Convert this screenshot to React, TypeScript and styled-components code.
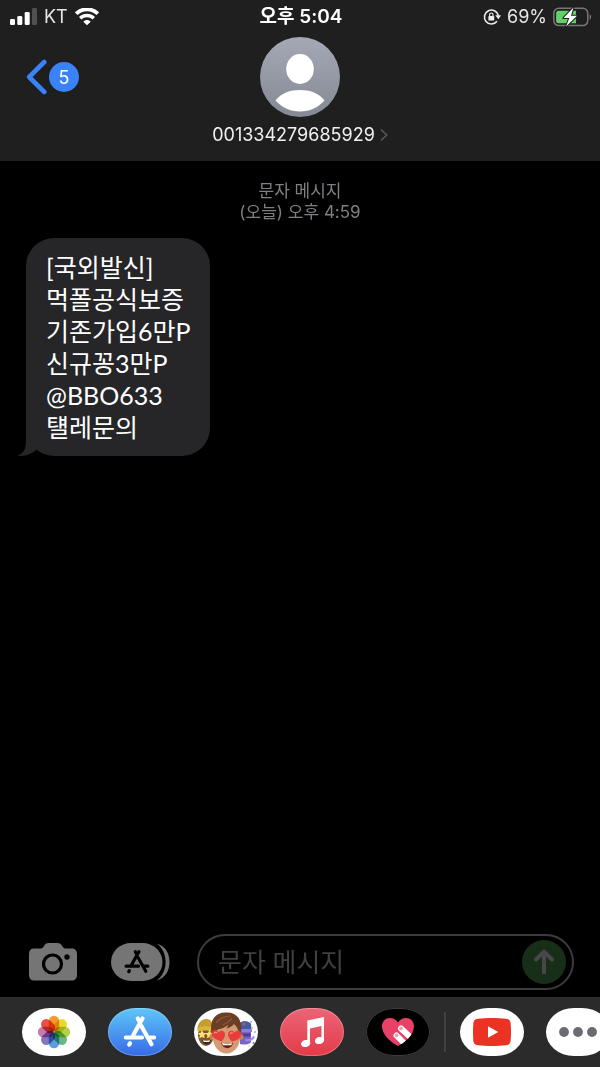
import React from 'react';
import styled, { createGlobalStyle } from 'styled-components';

const GlobalStyle = createGlobalStyle`
  * {
    box-sizing: border-box;
  }

  body {
    margin: 0;
    background: #000;
    color: #fff;
    font-family: Inter, 'Noto Sans CJK KR', sans-serif;
  }

  button {
    padding: 0;
    border: 0;
    background: none;
    color: inherit;
    font: inherit;
    cursor: pointer;
  }

  svg {
    display: block;
    flex: none;
  }
`;

const Screen = styled.div`
  display: flex;
  flex-direction: column;
  min-height: 100vh;
  overflow: hidden;
`;

const Header = styled.header`
  padding-bottom: 14px;
  background: #1f1f1f;
`;

const StatusBar = styled.div`
  display: grid;
  grid-template-columns: 1fr auto 1fr;
  align-items: center;
  height: 33px;
  padding: 0 8px 0 10px;
  font-size: 18px;
  line-height: 33px;
`;

const StatusGroup = styled.div<{ $end?: boolean }>`
  display: flex;
  align-items: center;
  justify-content: ${({ $end }) => ($end ? 'flex-end' : 'flex-start')};
  gap: ${({ $end }) => ($end ? '6px' : '7px')};
  color: #e6e6e6;
`;

const Clock = styled.time`
  font-size: 19px;
  font-weight: 600;
`;

const NavBar = styled.nav`
  display: grid;
  grid-template-columns: 1fr auto 1fr;
  align-items: start;
  padding: 4px 26px 0;
`;

const BackLink = styled.a`
  display: flex;
  align-items: center;
  gap: 2px;
  height: 80px;
  color: #3a82f7;
  text-decoration: none;
`;

const UnreadBadge = styled.span`
  width: 30px;
  height: 30px;
  border-radius: 50%;
  background: #3a82f7;
  color: #fff;
  font-size: 18px;
  line-height: 31px;
  text-align: center;
`;

const ContactButton = styled.button`
  display: flex;
  flex-direction: column;
  align-items: center;
  gap: 6px;
`;

const ContactName = styled.span`
  display: flex;
  align-items: center;
  gap: 5px;
  color: #f0f0f0;
  font-size: 18px;
  line-height: 24px;
`;

const Thread = styled.main`
  flex: 1;
  padding: 20px 26px;
`;

const ThreadDate = styled.p`
  margin: 0 0 15px;
  color: #7f7f84;
  font-size: 17px;
  line-height: 21px;
  text-align: center;
`;

const Bubble = styled.div`
  position: relative;
  width: fit-content;
  padding: 13px 19px 13px 20px;
  border-radius: 28px;
  background: #262628;
  font-family: Lato, 'Noto Sans CJK KR', sans-serif;
  font-size: 25px;
  line-height: 32px;
`;

const BubbleTail = styled.svg`
  position: absolute;
  left: -9px;
  bottom: 0;
`;

const Composer = styled.form`
  display: flex;
  align-items: center;
  padding: 0 26px 7px 28px;
`;

const ToolButton = styled.button<{ $space: number }>`
  flex: none;
  margin-right: ${({ $space }) => $space}px;
`;

const Field = styled.div`
  display: flex;
  flex: 1;
  align-items: center;
  min-width: 0;
  height: 56px;
  padding: 0 6px 0 19px;
  border: 2px solid #3c3c3c;
  border-radius: 28px;
`;

const MessageInput = styled.input`
  flex: 1;
  min-width: 0;
  padding: 0;
  border: 0;
  outline: none;
  background: transparent;
  color: #fff;
  font-family: Lato, 'Noto Sans CJK KR', sans-serif;
  font-size: 26px;
  line-height: 36px;

  &::placeholder {
    color: #404042;
    opacity: 1;
  }
`;

const SendButton = styled.button`
  display: grid;
  flex: none;
  place-items: center;
  width: 44px;
  height: 44px;
  border-radius: 50%;
  background: #172f19;
`;

const AppDrawer = styled.footer`
  display: flex;
  align-items: center;
  height: 70px;
  padding-left: 22px;
  overflow: hidden;
  background: #2b2b2b;
`;

const AppGroup = styled.div`
  display: flex;
  flex: none;
  gap: 22px;
`;

const DrawerDivider = styled.div`
  flex: none;
  width: 2px;
  height: 40px;
  margin: 0 14px;
  background: #414141;
`;

const AppButton = styled.button<{ $bg: string; $edge?: string }>`
  display: grid;
  flex: none;
  place-items: center;
  width: 64px;
  height: 48px;
  border-radius: 28px / 24px;
  background: ${({ $bg }) => $bg};
  box-shadow: inset 0 0 0 1px ${({ $edge }) => $edge ?? 'transparent'};
  overflow: hidden;
`;

function SignalIcon() {
  return (
    <svg width="27" height="18" viewBox="0 0 27 18" fill="#fff">
      <rect y="11" width="5" height="6" rx="1.3" />
      <rect x="7.3" y="8" width="5" height="9" rx="1.3" />
      <rect x="14.7" y="4" width="5" height="13" rx="1.3" />
      <rect x="22" width="5" height="17" rx="1.3" fill="#505050" />
    </svg>
  );
}

function WifiIcon() {
  return (
    <svg width="24" height="18" viewBox="0 0 24 18" fill="none" stroke="#fff">
      <path d="M1.2 5.700C7.2-.2 16.8-.2 22.8 5.700" strokeWidth="3.7" />
      <path d="M5.2 10.300c3.800-3.600 9.800-3.600 13.600 0" strokeWidth="3.500" />
      <path d="M12 17.300l-3.700-3.500c2-2.300 5.400-2.300 7.400 0z" fill="#fff" stroke="none" />
    </svg>
  );
}

function RotationLockIcon() {
  return (
    <svg width="18" height="18" viewBox="0 0 18 18" fill="none" stroke="#eee">
      <path d="M14 13.300A7 7 0 1 1 15.300 7.500" strokeWidth="1.6" />
      <path d="M12.300 7.300h5.700l-2.600 4z" fill="#eee" stroke="none" />
      <rect x="5.400" y="8" width="5.800" height="4.600" rx=".7" fill="#eee" stroke="none" />
      <path d="M6.600 8.200V6.700a1.700 1.700 0 0 1 3.400 0v1.500" strokeWidth="1.1" />
    </svg>
  );
}

function BatteryIcon() {
  return (
    <svg width="39" height="20" viewBox="0 0 39 20">
      <rect x=".8" y="1.2" width="34" height="17.4" rx="5" fill="none" stroke="#77777a" strokeWidth="1.5" />
      <path d="M36.6 7.2c2 .9 2 4.6 0 5.6z" fill="#77777a" />
      <path d="M5.6 3.7H23v12.500H5.6A2.5 2.5 0 0 1 3.1 13.700V6.200a2.500 2.500 0 0 1 2.500-2.500z" fill="#65ce66" />
      <path
        d="M20.500.500 10.500 11h5.800l-3.200 8.500L24 8.700h-6z"
        fill="#fff"
        stroke="#1f1f1f"
        strokeWidth="2"
        paintOrder="stroke"
        strokeLinejoin="round"
      />
    </svg>
  );
}

function BackIcon() {
  return (
    <svg width="21" height="36" viewBox="0 0 21 36" fill="none">
      <path d="M18.300 3 3.200 18l15.100 15" stroke="#3a82f7" strokeWidth="4.600" strokeLinecap="round" strokeLinejoin="round" />
    </svg>
  );
}

function AvatarIcon() {
  return (
    <svg width="80" height="80" viewBox="0 0 80 80">
      <defs>
        <linearGradient id="avatar" x1="0" y1="0" x2="0" y2="1">
          <stop offset="0" stopColor="#a5a9b6" />
          <stop offset="1" stopColor="#858993" />
        </linearGradient>
      </defs>
      <circle cx="40" cy="40" r="40" fill="url(#avatar)" />
      <ellipse cx="40" cy="32" rx="13.800" ry="15" fill="#fff" />
      <path d="M15.500 63.500C21 56 30 53 40 53s19 3 24.500 10.500C58 71 49.500 74.400 40 74.400S22 71 15.500 63.500z" fill="#fff" />
    </svg>
  );
}

function ChevronIcon() {
  return (
    <svg width="8" height="14" viewBox="0 0 8 14" fill="none">
      <path d="M1 1.500 6.700 7 1 12.500" stroke="#58585b" strokeWidth="1.500" />
    </svg>
  );
}

function CameraIcon() {
  return (
    <svg width="50" height="40" viewBox="0 0 50 40">
      <path
        d="M6 6.500h6c2 0 2.600-.6 3.600-2l1-1.400C17.600 1.700 18.500 1 20.500 1h9c2 0 3 .7 4 2.100l1 1.400c1 1.400 1.600 2 3.500 2h5.500c3.500 0 5.500 2 5.500 5.500v21c0 3.500-2 5.500-5.500 5.500H6C2.700 38.500 1 36.500 1 33V12c0-3.500 1.700-5.500 5-5.500z"
        fill="#757575"
      />
      <circle cx="24.500" cy="22" r="9" fill="none" stroke="#000" strokeWidth="3.200" />
      <circle cx="39" cy="15" r="2.700" fill="#000" />
    </svg>
  );
}

function AppStoreGlyph({ size, color }: { size: number; color: string }) {
  return (
    <svg width={size} height={size} viewBox="0 0 34 34" fill="none" stroke={color} strokeWidth="4.200" strokeLinecap="round">
      <path d="M14.800 3.500 17 7.500M19.500 3.500 10.300 20" />
      <path d="M2.800 22.500h16.200M27 22.500h4.200" />
      <path d="M7 28.300 6.200 29.600" />
      <path d="M18.300 11 28.500 29.200" />
    </svg>
  );
}

const StoreTool = styled.span`
  display: grid;
  width: 60px;
  height: 40px;

  & > * {
    grid-area: 1 / 1;
  }

  & > :last-child {
    align-self: center;
    margin-left: 13px;
  }
`;

function StoreToolIcon() {
  return (
    <StoreTool>
      <svg width="60" height="40" viewBox="0 0 60 40">
        <path d="M46 1.800C54 4 58.500 11 58.500 20S54 36 46 38.200c5.500-4 8.600-10.700 8.600-18.200S51.500 5.800 46 1.800z" fill="#757575" />
        <rect x="0" y="1" width="51.500" height="38" rx="20" ry="19" fill="#757575" />
      </svg>
      <AppStoreGlyph size={26} color="#000" />
    </StoreTool>
  );
}

function SendIcon() {
  return (
    <svg width="22" height="26" viewBox="0 0 22 26" fill="none">
      <path d="M11 23.500V3M3 10.500l8-7.700 8 7.700" stroke="#47474a" strokeWidth="4" strokeLinecap="round" strokeLinejoin="round" />
    </svg>
  );
}

const PETALS = ['#f39a2d', '#e9d92c', '#b5d14a', '#66b888', '#5a9fdc', '#8478bd', '#c67bb0', '#ea4f44'];

const Petal = styled.rect`
  mix-blend-mode: multiply;
`;

function PhotosIcon() {
  return (
    <svg width="34" height="34" viewBox="0 0 34 34">
      {PETALS.map((color, i) => (
        <Petal
          key={color}
          x="11.800"
          y=".8"
          width="10.400"
          height="15.800"
          rx="5.200"
          fill={color}
          transform={`rotate(${i * 45} 17 17)`}
        />
      ))}
    </svg>
  );
}

function MemojiIcon() {
  return (
    <svg width="64" height="48" viewBox="0 0 64 48">
      {/* left face with star eyes */}
      <ellipse cx="12" cy="27" rx="8" ry="11" fill="#80572f" />
      <path d="M3.500 23c-.5-7 3-12 9-12 4 0 7 3 7 12-5-2-11-2-16 0z" fill="#c59c2e" />
      <path d="M4 20c5-2.500 11-2.500 15 0v4c-5-2-11-2-15 0z" fill="#dab640" />
      <path d="m8 22 1.300 2.800 3 .4-2.200 2.100.5 3L8 28.900l-2.600 1.400.5-3-2.200-2.100 3-.4zM15.500 22l1.300 2.800 3 .4-2.200 2.100.5 3-2.600-1.400-2.600 1.400.5-3-2.200-2.100 3-.4z" fill="#ffe269" />
      <path d="M8 32c3 1 6 1 9 0-.5 6-7.500 6-9 0z" fill="#3d211d" />
      <path d="M9 32.300c2 .6 5 .6 7 0l-.6 1.700H9.700z" fill="#fff" />
      {/* right face with party horn */}
      <path d="M46 15c3-3 9-2 11 1v18c-2 3-7 3-11 2z" fill="#7764c7" />
      <path d="M46 15c3-3 9-2 11 1l.5 5H46z" fill="#405da6" />
      <path d="M46 21h12v3H46z" fill="#8f7ae0" />
      <path d="M46 25.500h11l-1 3H46z" fill="#4f3b92" />
      <path d="M51 31c4 1 7-.5 8-3 2-.5 2 2 .5 3-2 2-5 2.500-8 2z" fill="#a18be5" />
      <circle cx="50" cy="16" r="1.400" fill="#d94f51" />
      <circle cx="58.500" cy="20" r="1" fill="#f2c84b" />
      <circle cx="57" cy="14" r=".8" fill="#4b86ef" />
      <circle cx="61" cy="24" r=".8" fill="#4b86ef" />
      <circle cx="59.500" cy="35" r="1" fill="#4b86ef" />
      <circle cx="55" cy="38" r=".8" fill="#f2c84b" />
      {/* centre face with heart eyes */}
      <circle cx="18.500" cy="29" r="3" fill="#c18258" />
      <circle cx="46.500" cy="29" r="3" fill="#c18258" />
      <path d="M19 19c0-7 6-10 13.500-10S46 12 46 19v11c0 8-6 15.500-13.500 15.500S19 38 19 30z" fill="#d49b70" />
      <path d="M17.500 25c-2-12 3-20.500 14-20.500C42 3.500 49 11 47 25l-2 2c0-5-2-8-5-11-2 2.500-5 4-8 4.500 1-1 2-2 2-3.500-6 5-11 3.500-14 7z" fill="#6b3f25" />
      <path d="M22 15c4-5 9-7 14-7M29 17c4-2 7-4 9-7" stroke="#8f5c3a" strokeWidth="1.200" fill="none" />
      <path d="M27 34.500c4 2 8 2 12 0-.8 7.500-10.200 7.500-12 0z" fill="#6b211f" />
      <path d="M28 35c3.500 1.500 7 1.500 10 0l-.6 2.200h-8.600z" fill="#fff" />
      <path d="M27.500 33.500c-5-1.500-10.500-4.500-9.800-8.500.8-3.800 5.500-3.800 6.800-.6 2-3 6.500-2 6.500 1.800 0 3-1.500 5.300-3.500 7.300z" fill="#e83d38" />
      <path d="M38 33.500c-2-2-4.200-4.500-4-7.500.4-3.800 5-4.300 6.500-1.400 1.600-3 6.500-2.500 6.800 1.300.3 4-4.600 6.500-9.300 7.600z" fill="#e83d38" />
      <path d="M20 25.500c.5-1.200 2-1.500 3-.7M36 26c.5-1.200 2-1.500 3-.7" stroke="#ff8f86" strokeWidth="1.200" fill="none" />
    </svg>
  );
}

function MusicIcon() {
  return (
    <svg width="30" height="34" viewBox="0 0 30 34" fill="#fff">
      <path d="M10.300 5.500 27 2v23.500h-2.500V11l-11.500 2.500V28h-2.700z" />
      <ellipse cx="8.700" cy="28.500" rx="4.700" ry="3.500" transform="rotate(-15 8.700 28.500)" />
      <ellipse cx="22.500" cy="25.500" rx="4.700" ry="3.500" transform="rotate(-15 22.500 25.500)" />
    </svg>
  );
}

function DigitalTouchIcon() {
  return (
    <svg width="34" height="30" viewBox="0 0 34 30">
      <path id="touch-heart" d="M17 29C11 26 1 18.500 1 9.300 1 4.300 4.500 1 9 1c3.500 0 6.400 1.800 8 4.500C18.600 2.800 21.500 1 25 1c4.500 0 8 3.300 8 8.300C33 18.500 23 26 17 29z" fill="#e94068" />
      <clipPath id="touch-clip">
        <use href="#touch-heart" />
      </clipPath>
      <g clipPath="url(#touch-clip)" stroke="#fff" strokeWidth="6" strokeLinecap="round">
        <path d="m20 11.500 13 12M15.500 18.500 27 30" />
      </g>
      <circle cx="20" cy="11.300" r="1.900" fill="#f5a0b2" />
      <circle cx="15.500" cy="18.300" r="1.900" fill="#f5a0b2" />
    </svg>
  );
}

function YouTubeIcon() {
  return (
    <svg width="38" height="28" viewBox="0 0 38 28">
      <path d="M5 .8c8-1 20-1 28 0 3.500.5 4.400 2 4.700 5 .4 5.400.4 11 0 16.400-.3 3-1.200 4.500-4.700 5-8 1-20 1-28 0-3.500-.5-4.400-2-4.700-5-.4-5.400-.4-11 0-16.400C.600 2.800 1.500 1.300 5 .8z" fill="#ea3323" />
      <path d="m15 8.200 10.300 5.800L15 19.800z" fill="#fff" />
    </svg>
  );
}

function MoreIcon() {
  return (
    <svg width="38" height="10" viewBox="0 0 38 10" fill="#6b6c72">
      <circle cx="5" cy="5" r="4.900" />
      <circle cx="19" cy="5" r="4.900" />
      <circle cx="33" cy="5" r="4.900" />
    </svg>
  );
}

const MESSAGE = ['[국외발신]', '먹폴공식보증', '기존가입6만P', '신규꽁3만P', '@BBO633', '턜레문의'];

const APPS = [
  { label: '사진', bg: '#fff', icon: <PhotosIcon /> },
  {
    label: 'App Store',
    bg: 'linear-gradient(#5fc7f8, #366ae8)',
    edge: 'rgba(255, 255, 255, 0.25)',
    icon: <AppStoreGlyph size={34} color="#fff" />,
  },
  { label: '미모티콘', bg: '#fff', icon: <MemojiIcon /> },
  { label: '음악', bg: 'linear-gradient(#ec6578, #e33b47)', edge: 'rgba(255, 255, 255, 0.25)', icon: <MusicIcon /> },
  { label: 'Digital Touch', bg: '#000', edge: '#3d3d3d', icon: <DigitalTouchIcon /> },
];

export default function App() {
  return (
    <>
      <GlobalStyle />
      <Screen>
        <Header>
          <StatusBar>
            <StatusGroup>
              <SignalIcon />
              <span>KT</span>
              <WifiIcon />
            </StatusGroup>
            <Clock>오후 5:04</Clock>
            <StatusGroup $end>
              <RotationLockIcon />
              <span>69%</span>
              <BatteryIcon />
            </StatusGroup>
          </StatusBar>
          <NavBar>
            <BackLink href="#messages">
              <BackIcon />
              <UnreadBadge>5</UnreadBadge>
            </BackLink>
            <ContactButton type="button">
              <AvatarIcon />
              <ContactName>
                001334279685929
                <ChevronIcon />
              </ContactName>
            </ContactButton>
          </NavBar>
        </Header>

        <Thread>
          <ThreadDate>
            문자 메시지
            <br />
            (오늘) 오후 4:59
          </ThreadDate>
          <Bubble>
            <BubbleTail width="24" height="32" viewBox="0 0 24 32">
              <path d="M9 0v16c0 9-2 13.500-9 15.500 7 1.500 14-1 19-5.500V0z" fill="#262628" />
            </BubbleTail>
            {MESSAGE.map((line) => (
              <div key={line}>{line}</div>
            ))}
          </Bubble>
        </Thread>

        <Composer onSubmit={(e) => e.preventDefault()}>
          <ToolButton type="button" aria-label="카메라" $space={33}>
            <CameraIcon />
          </ToolButton>
          <ToolButton type="button" aria-label="앱" $space={26}>
            <StoreToolIcon />
          </ToolButton>
          <Field>
            <MessageInput type="text" placeholder="문자 메시지" aria-label="문자 메시지" />
            <SendButton type="submit" aria-label="보내기">
              <SendIcon />
            </SendButton>
          </Field>
        </Composer>

        <AppDrawer>
          <AppGroup>
            {APPS.map((app) => (
              <AppButton key={app.label} type="button" aria-label={app.label} $bg={app.bg} $edge={app.edge}>
                {app.icon}
              </AppButton>
            ))}
          </AppGroup>
          <DrawerDivider />
          <AppGroup>
            <AppButton type="button" aria-label="YouTube" $bg="#fff">
              <YouTubeIcon />
            </AppButton>
            <AppButton type="button" aria-label="더 보기" $bg="#fff">
              <MoreIcon />
            </AppButton>
          </AppGroup>
        </AppDrawer>
      </Screen>
    </>
  );
}
